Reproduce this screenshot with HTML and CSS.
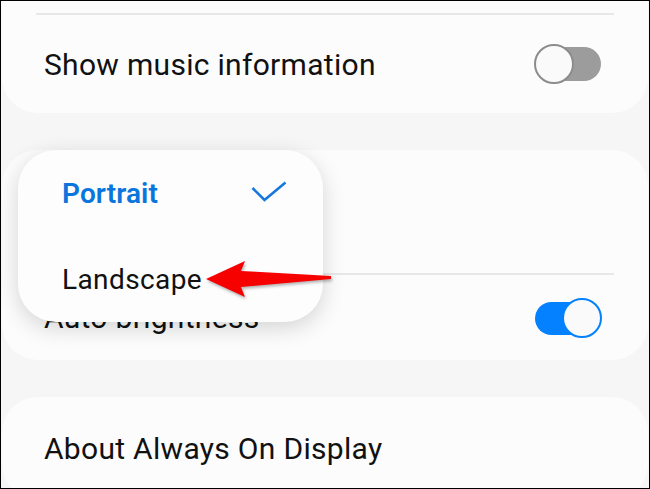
FILE: index.html
```html
<!DOCTYPE html>
<html lang="en">
<head>
  <meta charset="UTF-8">
  <title>Always On Display</title>
  <link rel="stylesheet" href="styles.css">
</head>
<body>
  <div class="screen">
    <div class="card card-top">
      <div class="divider"></div>
      <div class="row row-music">
        <span class="label">Show music information</span>
        <span class="switch"><span class="knob"></span></span>
      </div>
    </div>

    <div class="card">
      <div class="row row-orientation"></div>
      <div class="divider"></div>
      <div class="row row-brightness">
        <span class="label">Auto brightness</span>
        <span class="switch on"><span class="knob"></span></span>
      </div>
    </div>

    <div class="card">
      <div class="row row-about">
        <span class="label">About Always On Display</span>
      </div>
    </div>

    <div class="popup">
      <div class="option selected">
        <span>Portrait</span>
        <svg class="check" width="36" height="22" viewBox="0 0 36 22">
          <polyline points="1.5,7 13.5,19 34.5,1.5" fill="none" stroke="#1677dc" stroke-width="2.6" stroke-linejoin="miter"/>
        </svg>
      </div>
      <div class="option">
        <span>Landscape</span>
      </div>
    </div>

    <svg class="arrow" width="135" height="50" viewBox="0 0 135 50">
      <polygon points="5,24 44,6 40,16 130,21 130,24 40,32 44,42" fill="#f70000"/>
    </svg>
  </div>
</body>
</html>
```

FILE: styles.css
```css
body {
  margin: 0;
  font-family: 'Roboto', 'Liberation Sans', sans-serif;
  color: #111;
}
.screen {
  position: relative;
  width: 648px;
  height: 487px;
  border: 1px solid #000;
  background-color: #f6f6f6;
  overflow: hidden;
}
.card {
  background-color: #fcfcfc;
  margin: 0 1px 37px;
  border-radius: 36px;
}
.card-top {
  border-radius: 0 0 36px 36px;
  padding-top: 12px;
}
.divider {
  height: 2px;
  margin: 0 34px;
  background-color: #e8e8e8;
}
.row {
  display: flex;
  align-items: center;
  justify-content: space-between;
  padding: 0 47px 0 42px;
}
.label {
  font-size: 30px;
  letter-spacing: 0.3px;
}
.row-music {
  height: 98px;
}
.row-orientation {
  height: 123px;
}
.row-brightness {
  height: 85px;
}
.row-about {
  height: 103px;
}
.switch {
  position: relative;
  width: 66px;
  height: 40px;
}
.switch::before {
  content: '';
  position: absolute;
  left: 0;
  right: 0;
  top: 3px;
  height: 34px;
  border-radius: 17px;
  background-color: #9c9c9c;
}
.switch .knob {
  position: absolute;
  left: -1px;
  top: 0;
  width: 36px;
  height: 36px;
  border: 2px solid #8c8c8c;
  border-radius: 50%;
  background-color: #fafafa;
}
.switch.on::before {
  background-color: #0381fe;
  top: 4px;
  height: 33px;
}
.switch.on .knob {
  left: auto;
  right: -1px;
  border-color: #0381fe;
}
.popup {
  position: absolute;
  left: 17px;
  top: 149px;
  width: 305px;
  display: flex;
  flex-direction: column;
  background-color: #fdfdfd;
  border-radius: 38px;
  box-shadow: 0 6px 22px rgba(0, 0, 0, 0.16);
}
.option {
  height: 86px;
  display: flex;
  align-items: center;
  justify-content: space-between;
  padding: 0 36px 0 44px;
  font-size: 28px;
  letter-spacing: 0.4px;
}
.option.selected {
  color: #0a76dc;
  font-weight: 600;
  letter-spacing: 0.1px;
}
.check {
  margin-top: -2px;
}
.arrow {
  position: absolute;
  left: 200px;
  top: 254px;
  filter: drop-shadow(1px 2px 1.5px rgba(0, 0, 0, 0.3));
}
```
